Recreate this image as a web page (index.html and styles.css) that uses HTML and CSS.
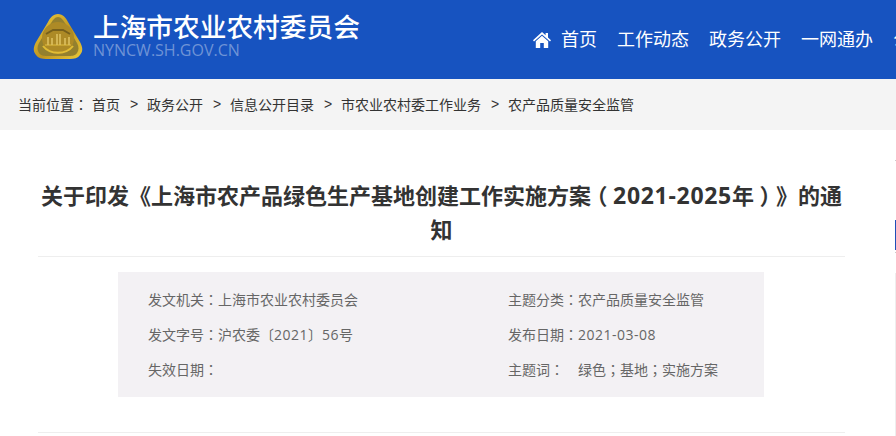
FILE: index.html
```html
<!DOCTYPE html>
<html lang="zh-CN">
<head>
    <meta charset="UTF-8">
    <title>上海市农业农村委员会</title>
    <link rel="stylesheet" href="styles.css">
</head>
<body>
    <!-- Header -->
    <header class="header">
        <div class="logo">
            <svg class="emblem" width="50" height="47" viewBox="0 0 50 47">
                <defs>
                    <linearGradient id="gold" x1="0" y1="0" x2="1" y2="1">
                        <stop offset="0" stop-color="#f0d040"/>
                        <stop offset="0.55" stop-color="#bf9420"/>
                        <stop offset="1" stop-color="#eccb3a"/>
                    </linearGradient>
                </defs>
                <path d="M25 1C30 1 33 5 35 9L47 29C50 35 50 38 47 42C45 45 41 46 37 46H13C9 46 5 45 3 42C0 38 0 35 3 29L15 9C17 5 20 1 25 1Z" fill="url(#gold)"/>
                <path d="M25 4C28 4 30 7 32 10L44 30C46 34 46 37 44 40C42 43 38 43 35 43H15C12 43 8 43 6 40C4 37 4 34 6 30L18 10C20 7 22 4 25 4Z" fill="#94802e"/>
                <circle cx="25" cy="25" r="16" fill="#ad8a26"/>
                <path d="M10 33C17 42 33 42 40 33" fill="none" stroke="#e2bd34" stroke-width="2"/>
                <path d="M12 32H38" stroke="#d8b63c" stroke-width="1.2"/>
                <path d="M15 32V24M19 32V25M24 32V21M27 32V21M32 32V25M36 32V24" stroke="#dcc060" stroke-width="1.6"/>
                <path d="M13 21L20 17H30L37 21" fill="none" stroke="#77601c" stroke-width="2"/>
            </svg>
            <div class="logo-text">
                <div class="site-name">上海市农业农村委员会</div>
                <div class="site-url">NYNCW.SH.GOV.CN</div>
            </div>
        </div>
        <nav class="nav">
            <a class="nav-item" href="#">
                <svg class="home-icon" width="18" height="16" viewBox="0 0 18 16">
                    <path d="M9 0L0 8.2L1 9.4L9 2.4L17 9.4L18 8.2L15 5.4V1H12.6V3.2Z" fill="#fff"/>
                    <path d="M9 3.8L2.8 9.2V16H7.2V11H10.8V16H15.2V9.2Z" fill="#fff"/>
                </svg>
                首页
            </a>
            <a class="nav-item" href="#">工作动态</a>
            <a class="nav-item" href="#">政务公开</a>
            <a class="nav-item" href="#">一网通办</a>
            <a class="nav-item" href="#">公众参与</a>
        </nav>
    </header>

    <!-- Breadcrumb -->
    <div class="crumbs">
        <span class="crumb-label">当前位置<span class="mid" lang="zh-TW">：</span></span>
        <a href="#">首页</a><i>&gt;</i>
        <a href="#">政务公开</a><i>&gt;</i>
        <a href="#">信息公开目录</a><i>&gt;</i>
        <a href="#">市农业农村委工作业务</a><i>&gt;</i>
        <a href="#">农产品质量安全监管</a>
    </div>

    <!-- Article -->
    <main class="article">
        <h1 class="title">关于印发《上海市农产品绿色生产基地创建工作实施方案<span class="mid paren" lang="zh-TW">（</span><span class="num">2021-2025</span>年<span class="mid paren" lang="zh-TW">）</span>》的通知</h1>
        <div class="info">
            <div>发文机关<span class="mid" lang="zh-TW">：</span>上海市农业农村委员会</div>
            <div>主题分类<span class="mid" lang="zh-TW">：</span>农产品质量安全监管</div>
            <div>发文字号<span class="mid" lang="zh-TW">：</span>沪农委〔<span class="num">2021</span>〕<span class="num">56</span>号</div>
            <div>发布日期<span class="mid" lang="zh-TW">：</span><span class="num">2021-03-08</span></div>
            <div>失效日期<span class="mid" lang="zh-TW">：</span></div>
            <div>主题词<span class="mid" lang="zh-TW">：</span><span class="keywords">绿色<span class="mid" lang="zh-TW">；</span>基地<span class="mid" lang="zh-TW">；</span>实施方案</span></div>
        </div>
        <div class="rule"></div>
    </main>

    <!-- Clipped side widget at the window edge -->
    <div class="edge"></div>
</body>
</html>
```

FILE: styles.css
```css
* {
    box-sizing: border-box;
}

html, body {
    overflow: hidden;
}

body {
    position: relative;
    margin: 0;
    padding: 0;
    width: 896px;
    height: 436px;
    background-color: #fff;
    font-family: "Liberation Sans", "Noto Sans CJK SC", sans-serif;
}

a {
    color: inherit;
    text-decoration: none;
}

.header {
    display: flex;
    height: 79px;
    padding-left: 33px;
    background-color: #1753c0;
    overflow: hidden;
}

.logo {
    display: flex;
    flex-shrink: 0;
    gap: 10px;
    width: 500px;
    padding-top: 13px;
}

.site-name {
    font-size: 26.7px;
    line-height: 30px;
    font-weight: 500;
    color: #fff;
}

.site-url {
    margin-top: -3px;
    font-family: "Open Sans", "Liberation Sans", sans-serif;
    font-size: 16px;
    line-height: 20px;
    color: #6f93d6;
}

.nav {
    display: flex;
    flex-shrink: 0;
    gap: 20px;
    padding-top: 27px;
    font-size: 18px;
    line-height: 26px;
    color: #fff;
}

.nav-item {
    display: flex;
    align-items: center;
    height: 26px;
    white-space: nowrap;
}

.home-icon {
    margin-right: 10px;
}

.crumbs {
    display: flex;
    align-items: center;
    height: 51px;
    padding: 0 0 2px 18px;
    background-color: #f4f4f4;
    font-size: 14px;
    color: #333;
}

.crumb-label {
    margin-right: 4px;
}

.crumbs i {
    margin: 0 8.8px 0 10px;
    font-style: normal;
}

.article {
    width: 807px;
    margin-left: 38px;
    padding-top: 50px;
}

.title {
    margin: 0;
    padding-bottom: 8px;
    border-bottom: 1px solid #eee;
    font-size: 22px;
    line-height: 34px;
    font-weight: 700;
    text-align: center;
    color: #333;
}

.mid {
    font-family: "Noto Sans CJK TC", sans-serif;
    line-height: 1;
}

.paren {
    padding: 0 5.5px;
    font-feature-settings: "halt";
}

.num {
    font-family: "Open Sans", "Liberation Sans", sans-serif;
    line-height: 1;
}

.title .num {
    font-size: 23px;
    letter-spacing: 0.7px;
}

.info {
    display: grid;
    grid-template-columns: 360px 1fr;
    grid-auto-rows: 35px;
    align-items: center;
    width: 646px;
    height: 125px;
    margin: 15px 0 35px 80px;
    padding: 9px 0 11px 30px;
    background-color: #f3f1f4;
    font-size: 14px;
    color: #666;
}

.info .num {
    letter-spacing: 0.5px;
}

.keywords {
    margin-left: 14px;
}

.rule {
    height: 1px;
    background-color: #eee;
}

.edge {
    position: absolute;
    top: 160px;
    right: 0;
    width: 1px;
    height: 276px;
    background: linear-gradient(to bottom,
        #ccc 0, #ccc 1px,
        transparent 1px, transparent 60px,
        #1f4fb8 60px, #1f4fb8 90px,
        transparent 90px, transparent 92px,
        #ccc 92px, #ccc 93px,
        transparent 93px, transparent 113px,
        #eee 113px, #eee 100%);
}
```
